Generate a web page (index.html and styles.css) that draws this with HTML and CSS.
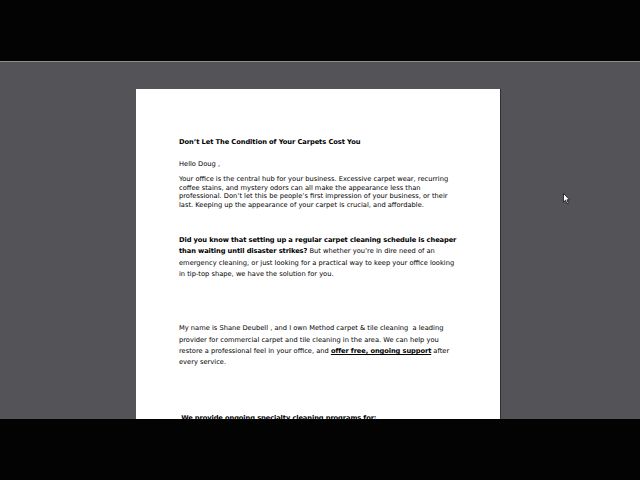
FILE: index.html
```html
<!DOCTYPE html>
<html>
<head>
<meta charset="utf-8">
<link rel="stylesheet" href="styles.css">
</head>
<body>
<div class="screen">
  <div class="topbar"></div>
  <div class="viewer">
    <div class="page">
      <div class="title">Don’t Let The Condition of Your Carpets Cost You</div>
      <div class="hello">Hello Doug ,</div>
      <div class="p1">Your office is the central hub for your business. Excessive carpet wear, recurring<br>coffee stains, and mystery odors can all make the appearance less than<br>professional. Don’t let this be people’s first impression of your business, or their<br>last. Keeping up the appearance of your carpet is crucial, and affordable.</div>
      <div class="p2"><b class="strong">Did you know that setting up a regular carpet cleaning schedule is cheaper<br>than waiting until disaster strikes?</b> But whether you’re in dire need of an<br>emergency cleaning, or just looking for a practical way to keep your office looking<br>in tip-top shape, we have the solution for you.</div>
      <div class="p3">My name is Shane Deubell , and I own Method carpet &amp; tile cleaning &nbsp;a leading<br>provider for commercial carpet and tile cleaning in the area. We can help you<br>restore a professional feel in your office, and <b class="strong"><u>offer free, ongoing support</u></b> after<br>every service.</div>
      <div class="p4">&nbsp;<b class="strong"><u>We provide ongoing specialty cleaning programs for:</u></b></div>
    </div>
  </div>
  <div class="bottombar"></div>
  <svg class="cursor" width="8" height="12" viewBox="0 0 8 12"><path d="M0.5 0.5 L0.5 9 L2.5 7.2 L4 10.8 L5.3 10.2 L3.9 6.8 L6.6 6.8 Z" fill="#fff" stroke="#111" stroke-width="0.8"/></svg>
</div>
</body>
</html>
```
FILE: styles.css
```css
html, body {
  margin: 0;
  padding: 0;
  background: #000;
}
.screen {
  position: relative;
  width: 640px;
  height: 480px;
  overflow: hidden;
  display: flex;
  flex-direction: column;
}
.topbar {
  height: 61px;
  background: #030303;
  border-bottom: 1px solid #8e8e90;
  flex: none;
}
.viewer {
  height: 357px;
  background: #545458;
  overflow: hidden;
  flex: none;
}
.bottombar {
  flex: 1;
  background: #030303;
}
.page {
  margin-left: 136px;
  margin-top: 27px;
  width: 365px;
  height: 400px;
  box-sizing: border-box;
  background: #fff;
  border-right: 1px solid #2e2e30;
  padding: 48.8px 0 0 43px;
  font-family: "DejaVu Sans", Verdana, sans-serif;
  font-size: 6.7px;
  color: #000;
  white-space: nowrap;
  display: flex;
  flex-direction: column;
}
.title {
  font-weight: bold;
  line-height: 8.7px;
  letter-spacing: -0.08px;
}
.strong {
  letter-spacing: -0.1px;
}
.hello {
  line-height: 8.7px;
  margin-top: 13.3px;
}
.p1 {
  line-height: 8.7px;
  margin-top: 6.3px;
}
.p2 {
  line-height: 11.3px;
  margin-top: 25.4px;
}
.p3 {
  line-height: 11.3px;
  margin-top: 43.3px;
}
.p4 {
  line-height: 11.3px;
  margin-top: 44.2px;
}
.cursor {
  position: absolute;
  left: 563px;
  top: 193px;
}
```
